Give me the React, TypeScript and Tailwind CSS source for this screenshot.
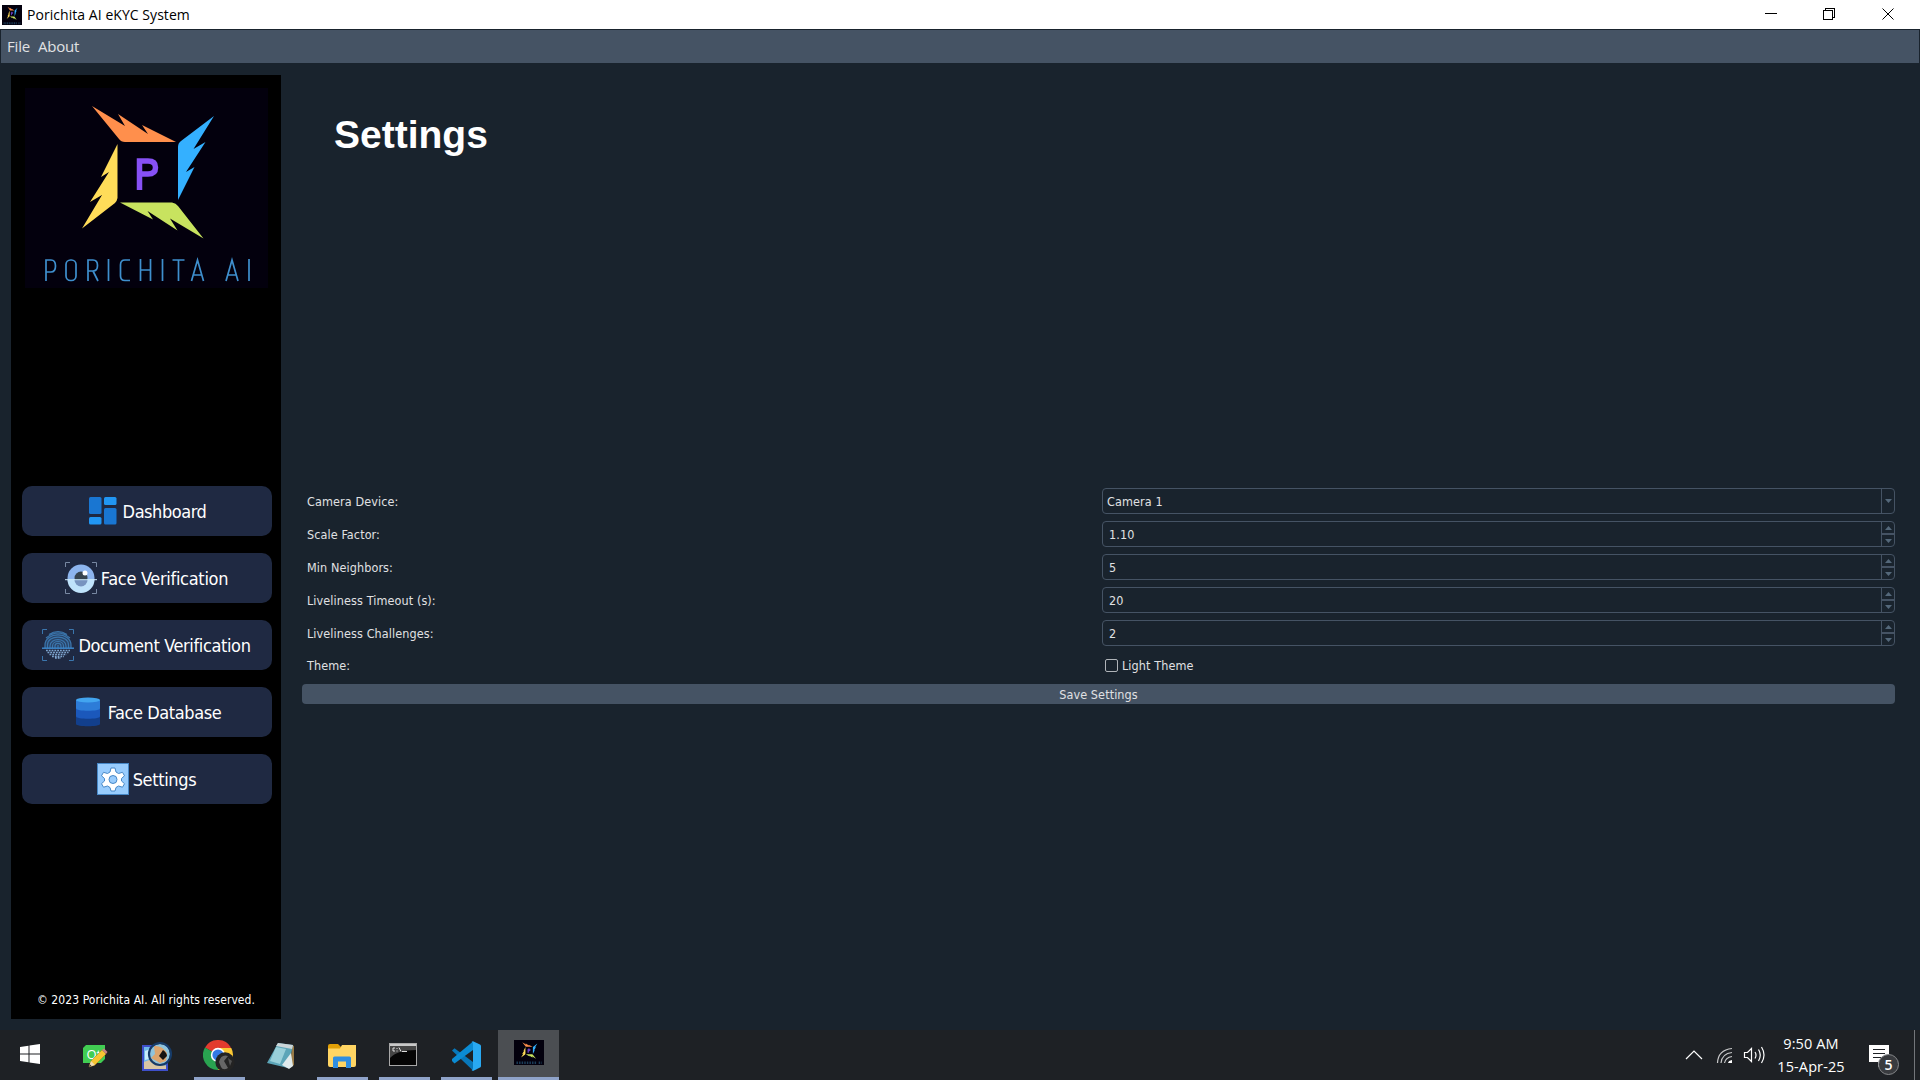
import React from "react";

const tahoma = "font-['DejaVu_Sans_Condensed','DejaVu_Sans',sans-serif] [font-stretch:condensed]";
const segoe = "font-['Open_Sans','Noto_Sans',sans-serif] [font-stretch:normal]";

function Blades() {
  return (
    <>
      <path fill="#ff8f4c" d="M92 36 L119 69 Q121 72 125 72 L176 72 L142 55 L148 64 L118 44 L125 56 Z" />
      <path fill="#34b0ff" d="M214 46 L181 71 Q178 73 178 77 L178 130 L194.500 97 L186 102 L205.500 72 L193.500 79 Z" />
      <path fill="#ffdc59" d="M117.500 74 L117.500 128 Q117 131 115 133 L82 158.500 L102 125 L90 132 L109 102 L101 107 Z" />
      <path fill="#c8e35f" d="M120 132.500 L172 132.500 Q176 133 178 136 L203.500 168.500 L170 148.500 L177.500 160.500 L147.500 141 L153 149.500 Z" />
    </>
  );
}

function Logo() {
  return (
    <svg viewBox="25 18 243 200" className="block h-[200px] w-[243px]">
      <rect x="25" y="18" width="243" height="200" fill="#03000d" />
      <Blades />
      <path d="M139.500 120 V91 H148 Q155.500 91 155.500 97.500 Q155.500 104 148 104 H141" fill="none" stroke="#8750f5" strokeWidth="5.500" />
      <g fill="none" stroke="#3f8fce" strokeWidth="1.700">
        <path d="M46 211V190H51Q55.500 190 55.500 196Q55.500 202 51 202H46" />
        <rect x="66" y="190" width="10" height="20.500" rx="4.500" />
        <path d="M88 211V190H93Q97.500 190 97.500 195.500Q97.500 201 93 201H88M93 201L98 211" />
        <path d="M108.500 189V211" />
        <path d="M130 190H125Q120.500 190 120.500 195V206Q120.500 210.500 125 210.500H130" />
        <path d="M140.500 189V211M150.500 189V211M140.500 200H150.500" />
        <path d="M162.500 189V211M172.500 190H184.500M178.500 190V211" />
        <path d="M191.500 211L197.500 190L203.500 211M193.500 205H201.500" />
        <path d="M226 211L232 190L238 211M228 205H236" />
        <path d="M249 189V211" />
      </g>
    </svg>
  );
}

function MiniLogo({ className }: { className: string }) {
  return (
    <svg viewBox="25 18 243 200" preserveAspectRatio="none" className={className}>
      <rect x="25" y="18" width="243" height="200" fill="#03000d" />
      <Blades />
      <path d="M139.500 120 V91 H148 Q155.500 91 155.500 97.500 Q155.500 104 148 104 H141" fill="none" stroke="#8750f5" strokeWidth="8" />
      <path d="M45 200H210M225 200H250" stroke="#1b3c58" strokeWidth="20" strokeDasharray="12 9" />
    </svg>
  );
}

const DashboardIcon = () => (
  <svg viewBox="0 0 32 32" className="size-8 shrink-0">
    <rect x="2" y="2" width="12.500" height="17" rx="1.500" fill="#1976d2" />
    <rect x="17" y="2" width="12.500" height="8" rx="1.500" fill="#2196f3" />
    <rect x="2" y="22" width="12.500" height="7.500" rx="1.500" fill="#2196f3" />
    <rect x="17" y="13" width="12.500" height="16.500" rx="1.500" fill="#1976d2" />
  </svg>
);

const EyeIcon = () => (
  <svg viewBox="0 0 32 32" className="size-8 shrink-0">
    <path d="M0.500 5V0.500H5M27 0.500H31.500V5M0.500 27V31.500H5M27 31.500H31.500V27" fill="none" stroke="#7888a2" />
    <circle cx="16" cy="16" r="13.500" fill="#8db5ee" />
    <path d="M2.500 17.500A13.500 13.500 0 0 0 29.500 17.500Z" fill="#bfe3fb" />
    <circle cx="16" cy="16" r="6.500" fill="#37444f" />
    <path d="M9.500 18A6.500 6.500 0 0 0 22.500 18Z" fill="#7794bf" />
    <circle cx="20" cy="11" r="2.500" fill="#fff" />
    <path d="M0 17.700H32" stroke="#cdeafc" />
  </svg>
);

const FingerprintIcon = () => (
  <svg viewBox="0 0 32 32" className="size-8 shrink-0" fill="none">
    <path d="M0.500 5V0.500H5M27 0.500H31.500V5M0.500 27V31.500H5M27 31.500H31.500V27" stroke="#3b76ad" />
    <path d="M3 19V16C3 -1 29 -1 29 16V19Z" fill="#3b76ad" opacity="0.350" />
    <g stroke="#3b76ad" strokeWidth="1.200">
      <path d="M7 5.500Q16 -0.500 25 5.500M4 9Q16 -1 28 9" />
      <path d="M3 19V16C3 2.500 29 2.500 29 16V19M5.500 19V16C5.500 5.500 26.500 5.500 26.500 16V19M8 19V17C8 8.500 24 8.500 24 17V19M10.500 19V17C10.500 11 21.500 11 21.500 17V19M13 19V17C13 13.500 19 13.500 19 17V19M16 16V19" />
    </g>
    <g stroke="#7fa5cf" strokeWidth="1.300" strokeDasharray="1.800 1">
      <path d="M4 21.500H28M5.500 23.500H26.500M7.500 25.500H24.500M10 27.500H22M13 29H19" />
    </g>
    <path d="M0 19.200H32" stroke="#3d8ad0" strokeWidth="1.400" />
  </svg>
);

const DatabaseIcon = () => (
  <svg viewBox="0 0 32 32" className="size-8 shrink-0">
    <path d="M4 21V28C4 31 28 31 28 28V21Z" fill="#123f8c" />
    <path d="M4 13V20.500C4 23.500 28 23.500 28 20.500V13Z" fill="#1b58bb" />
    <path d="M4 4V12.500C4 15.500 28 15.500 28 12.500V4Z" fill="#2d7cd8" />
    <ellipse cx="16" cy="4" rx="12" ry="2.400" fill="#42a5f0" />
  </svg>
);

const GearIcon = () => (
  <svg viewBox="0 0 32 32" className="size-8 shrink-0">
    <rect x="0.500" y="0.500" width="31" height="31" fill="#98ccfd" stroke="#4788c7" />
    <path d="M14 5h4l1 4 2.500 1.500 4-1.200 2 3.500-3 2.700v2.500l3 2.700-2 3.500-4-1.200L19 24.500l-1 3.500h-4l-1-3.500-2.500-1.500-4 1.200-2-3.500 3-2.700v-2.500l-3-2.700 2-3.500 4 1.200L13 9Z" fill="#fff" stroke="#4788c7" strokeLinejoin="round" />
    <circle cx="16" cy="16.500" r="4" fill="#98ccfd" stroke="#4788c7" />
  </svg>
);

const nav = [
  { label: "Dashboard", icon: <DashboardIcon />, text: "w-[85px] tracking-[-0.45px]" },
  { label: "Face Verification", icon: <EyeIcon />, text: "w-[129px] tracking-[-0.3px]" },
  { label: "Document Verification", icon: <FingerprintIcon />, text: "w-[175px] tracking-[-0.37px]" },
  { label: "Face Database", icon: <DatabaseIcon />, text: "w-[115px] tracking-[-0.42px]" },
  { label: "Settings", icon: <GearIcon />, text: "w-[65px] tracking-[-0.35px]" },
];

const Up = () => <svg viewBox="0 0 7 4" className="h-1 w-[7px]"><path d="M0 4L3.500 0L7 4Z" fill="#54687a" /></svg>;
const Down = () => <svg viewBox="0 0 7 4" className="h-1 w-[7px]"><path d="M0 0L3.500 4L7 0Z" fill="#54687a" /></svg>;

function Field({ value, combo = false }: { value: string; combo?: boolean }) {
  return (
    <div className="flex h-[26px] w-[793px] overflow-hidden rounded border border-[#455364]">
      <span className={`flex flex-1 items-center pt-0.5 ${combo ? "pl-1" : "pl-1.5"}`}>{value}</span>
      {combo ? (
        <span className="flex w-[13px] items-center justify-center border-l border-[#455364]"><Down /></span>
      ) : (
        <span className="flex w-[13px] flex-col border-l border-[#455364]">
          <span className="flex h-3 items-center justify-center border-b border-[#455364]"><Up /></span>
          <span className="flex h-3 items-center justify-center border-t border-[#455364]"><Down /></span>
        </span>
      )}
    </div>
  );
}

const rows = [
  { label: "Camera Device:", value: "Camera 1", combo: true },
  { label: "Scale Factor:", value: "1.10" },
  { label: "Min Neighbors:", value: "5" },
  { label: "Liveliness Timeout (s):", value: "20" },
  { label: "Liveliness Challenges:", value: "2" },
];

const WindowsIcon = () => (
  <svg viewBox="0 0 20 20" className="mb-1 size-5" fill="#fff"><path d="M0 3L8.500 1.700V9.500H0ZM9.500 1.500L20 0V9.500H9.500ZM0 10.500H8.500V18.300L0 17ZM9.500 10.500H20V20L9.500 18.500Z" /></svg>
);
const QtIcon = () => (
  <svg viewBox="0 0 26 24" className="h-6 w-[26px]">
    <path d="M4 1H23V15L19 19H1V4Z" fill="#41cd52" />
    <text x="4.500" y="14.500" fontSize="13" fill="#fff" fontFamily="Open Sans">Qt</text>
    <path d="M7 23L9 17L20 6L24 10L13 21Z" fill="#f7c531" stroke="#a97916" strokeWidth="0.500" />
    <path d="M7 23L9 17L13 21Z" fill="#f1dcb0" /><path d="M20 6L22 4.500L25.500 8L24 10Z" fill="#c98282" /><path d="M7 23L8 20.500L9.500 22Z" fill="#333" />
  </svg>
);
const LensIcon = () => (
  <svg viewBox="0 0 30 30" className="size-[30px]">
    <rect x="1" y="5" width="24" height="24" fill="#6fb9ea" stroke="#3e4fc9" strokeWidth="2" />
    <path d="M2 21L10 18L24 25V28H2Z" fill="#d9c6a4" /><path d="M3 10L11 7V17L3 19Z" fill="#c9edfb" />
    <circle cx="18" cy="13" r="10" fill="#8fc4dd" />
    <path d="M12 5Q20 4 25 12L24 20L18 22L9 17L13 13Z" fill="#dda56d" /><path d="M17 15L21 9Q25 12 25 15L21 19Z" fill="#171310" />
    <circle cx="18" cy="13" r="11" fill="none" stroke="#163b68" strokeWidth="2.200" />
  </svg>
);
const ChromeIcon = () => (
  <svg viewBox="0 0 32 32" className="size-8">
    <path d="M15 15L2 7.500A15 15 0 0 1 28 7.500Z" fill="#e33b2e" />
    <path d="M15 15L2 7.500A15 15 0 0 0 15 30L21.500 18.500Z" fill="#29a350" />
    <path d="M15 8H28.300A15 15 0 0 1 15 30L21.500 18.500Z" fill="#fcc934" />
    <circle cx="15" cy="15" r="7.200" fill="#fff" /><circle cx="15" cy="15" r="5.600" fill="#3479e6" />
    <circle cx="22" cy="22" r="9.700" fill="#232323" /><path d="M16 22Q18 14 25 16L21 21L25 28Q20 31 18 27Z" fill="#666" /><path d="M25 18L29 21L27 26Z" fill="#505050" />
  </svg>
);
const NotepadIcon = () => (
  <svg viewBox="0 0 28 28" className="size-7">
    <path d="M25 3L27 4V23L23 26Z" fill="#9a7b47" />
    <path d="M11 1L26 3L21 26L0 21Z" fill="#5ca5b8" /><path d="M11 1L26 3L25 7L9 4Z" fill="#cbd5d8" />
    <path d="M9 5L19 7L13 22L3 19Z" fill="#a9d9e1" opacity="0.800" /><path d="M24 11L26 24L22 27L15 23Z" fill="#dfeaec" />
  </svg>
);
const FolderIcon = () => (
  <svg viewBox="0 0 28 24" className="h-6 w-7">
    <path d="M0 2Q0 0 2 0H10L13 3V8H0Z" fill="#e2a007" /><path d="M0 4.500H12L14 1H28V21Q28 23 26 23H2Q0 23 0 21Z" fill="#ffd563" />
    <path d="M5 24V14Q5 12.500 6.500 12.500H21.500Q23 12.500 23 14V24H18V17.500H10V24Z" fill="#2f8ee0" />
  </svg>
);
const ConsoleIcon = () => (
  <svg viewBox="0 0 28 23" className="mb-0.5 mr-0.5 h-[23px] w-7">
    <rect x="0.500" y="0.500" width="27" height="22" fill="#050505" stroke="#a8a8a8" /><rect x="1" y="1" width="26" height="2" fill="#c9c9c9" />
    <path d="M1 3H27V7Q8 7 1 15Z" fill="#454545" />
    <path d="M6 5H4V8H6M8 5V6M8 7.500V8.500M10 4.500L12 8.500M13 8.500H18" stroke="#ddd" fill="none" />
  </svg>
);
const CodeIcon = () => (
  <svg viewBox="0 0 30 30" className="size-[30px]">
    <path d="M1 9.500L3.500 7.300L22 21V29.500Z" fill="#0877b9" /><path d="M1 20L3.500 22.500L22 9V0.500L1 18Z" fill="#0b8bd3" />
    <path d="M22 0.300L29 3.500Q30 4 30 5V25Q30 26 29 26.500L22 30L20.500 29Q22 29 22 27V3Q22 1 20.500 1Z" fill="#29a9f2" />
  </svg>
);

const tasks = [
  { icon: <WindowsIcon />, running: false, slot: "mr-1 w-[60px]" },
  { icon: <QtIcon />, running: false, slot: "w-[62px]" },
  { icon: <LensIcon />, running: false, slot: "w-[62px]" },
  { icon: <ChromeIcon />, running: true, slot: "w-[62px]" },
  { icon: <NotepadIcon />, running: false, slot: "w-[61px]" },
  { icon: <FolderIcon />, running: true, slot: "w-[62px]" },
  { icon: <ConsoleIcon />, running: true, slot: "w-[62px]" },
  { icon: <CodeIcon />, running: true, slot: "w-[62px]" },
];

export default function App() {
  return (
    <div className={`flex h-[1080px] w-[1920px] flex-col overflow-hidden bg-[#19232d] text-[#e0e1e3] ${tahoma}`}>
      <header className={`flex h-[29px] items-center bg-white pl-0.5 text-black ${segoe}`}>
        <MiniLogo className="h-5 w-5" />
        <span className="ml-[5px] text-[14px] tracking-[0.05px]">Porichita AI eKYC System</span>
        <svg viewBox="0 0 150 29" className="ml-auto mr-[20px] h-[29px] w-[150px]" fill="none" stroke="#000" shapeRendering="crispEdges">
          <path d="M15 13.500H27" />
          <path d="M73.500 10.500H82.500V19.500H73.500ZM75.500 10V8.500H84.500V17.500H83" />
          <path d="M132.500 8.500L143.500 19.500M143.500 8.500L132.500 19.500" shapeRendering="auto" />
        </svg>
      </header>
      <nav className={`mx-px mt-px flex h-[33px] items-center gap-2 bg-[#455364] pl-1.5 text-[15px] tracking-[-0.2px] ${segoe}`}>
        <span>File</span>
        <span>About</span>
      </nav>
      <main className="flex min-h-0 flex-1 pl-[11px] pt-3">
        <aside className="flex h-[944px] w-[270px] flex-col bg-black pl-[11px] pr-[9px] pt-[13px]">
          <div className="ml-[3px]"><Logo /></div>
          <div className="mt-[198px] flex flex-col gap-[17px]">
            {nav.map((n) => (
              <button key={n.label} className="flex h-[50px] items-center justify-center gap-[3px] rounded-[10px] bg-[#1f2942] text-[18px] text-white">
                {n.icon}
                <span className={`whitespace-nowrap ${n.text}`}>{n.label}</span>
              </button>
            ))}
          </div>
          <p className="mb-[10px] mt-auto whitespace-nowrap pr-0.5 text-center text-[12px] tracking-[0.08px] text-white">© 2023 Porichita AI. All rights reserved.</p>
        </aside>
        <section className="ml-[21px] w-[1593px] text-[12.5px] tracking-[0.1px]">
          <h1 className="ml-8 mt-[37px] h-[46px] font-['Liberation_Sans',Arial,sans-serif] text-[39px] font-bold leading-[46px] tracking-normal text-white">Settings</h1>
          <div className="mt-[330px] flex flex-col gap-[7px]">
            {rows.map((r) => (
              <div key={r.label} className="flex items-center justify-between pl-[5px]">
                <span className="pt-0.5">{r.label}</span>
                <Field value={r.value} combo={r.combo} />
              </div>
            ))}
          </div>
          <div className="mt-[9px] flex h-5 items-center pl-[5px]">
            <span className="w-[798px] pt-0.5">Theme:</span>
            <span className="size-[13px] rounded-[2px] border border-[#b0b4b9]" />
            <span className="ml-1 pt-0.5">Light Theme</span>
          </div>
          <button className="mt-[9px] block h-5 w-full rounded bg-[#455364] pt-px text-center leading-[19px]">Save Settings</button>
        </section>
      </main>
      <footer className={`flex h-[50px] shrink-0 bg-[#1e2125] text-white ${segoe}`}>
        {tasks.map((t, i) => (
          <div key={i} className={`flex shrink-0 flex-col items-center ${t.slot}`}>
            <div className="flex h-[47px] items-center pt-1">{t.icon}</div>
            {t.running && <div className="h-[3px] w-[51px] bg-[#8fa3c9]" />}
          </div>
        ))}
        <div className="ml-px flex w-[61px] flex-col bg-[#4b4e52]">
          <div className="flex h-[47px] items-center justify-center pb-0.5"><MiniLogo className="h-[25px] w-[30px]" /></div>
          <div className="h-[3px] bg-[#8fa3c9]" />
        </div>
        <svg viewBox="0 0 80 50" className="ml-auto h-[50px] w-20" fill="none" stroke="#fff" strokeWidth="1.200">
          <path d="M1 29L9 21L17 29" />
          <path d="M32.500 33Q33 20 47 18.500M36 33Q37 23.500 47 22.500M39.500 33Q40.500 27.500 47 26.500" stroke="#c9cacb" />
          <path d="M43 33Q43.500 30.500 47 30V33Z" fill="#fff" stroke="none" />
          <path d="M59.500 22.500H62.500L66.500 18.500V31.500L62.500 27.500H59.500ZM70 22Q72 25 70 28.500M73.500 19.500Q77 25 73.500 31M76.500 17Q81.500 25 76.500 33" />
        </svg>
        <div className="ml-[8px] flex w-[76px] flex-col items-center pt-0.5 text-[14.5px] leading-[23px] tracking-[0.1px]">
          <span className="whitespace-nowrap">9:50 AM</span>
          <span className="whitespace-nowrap">15-Apr-25</span>
        </div>
        <svg viewBox="0 0 40 50" className="ml-[18px] h-[50px] w-10">
          <path d="M2 15H22V32H16L11 37V32H2Z" fill="#fff" />
          <path d="M6 19.500H18M6 23.500H18M6 27.500H14" stroke="#1e2125" />
          <circle cx="21.500" cy="34.500" r="10" fill="#393b3f" stroke="#85878a" />
          <text x="21.500" y="39.500" textAnchor="middle" fontSize="14" fontWeight="600" fill="#fff" fontFamily="Open Sans">5</text>
        </svg>
        <div className="ml-[7px] mr-[5px] w-px bg-[#73767a]" />
      </footer>
    </div>
  );
}
